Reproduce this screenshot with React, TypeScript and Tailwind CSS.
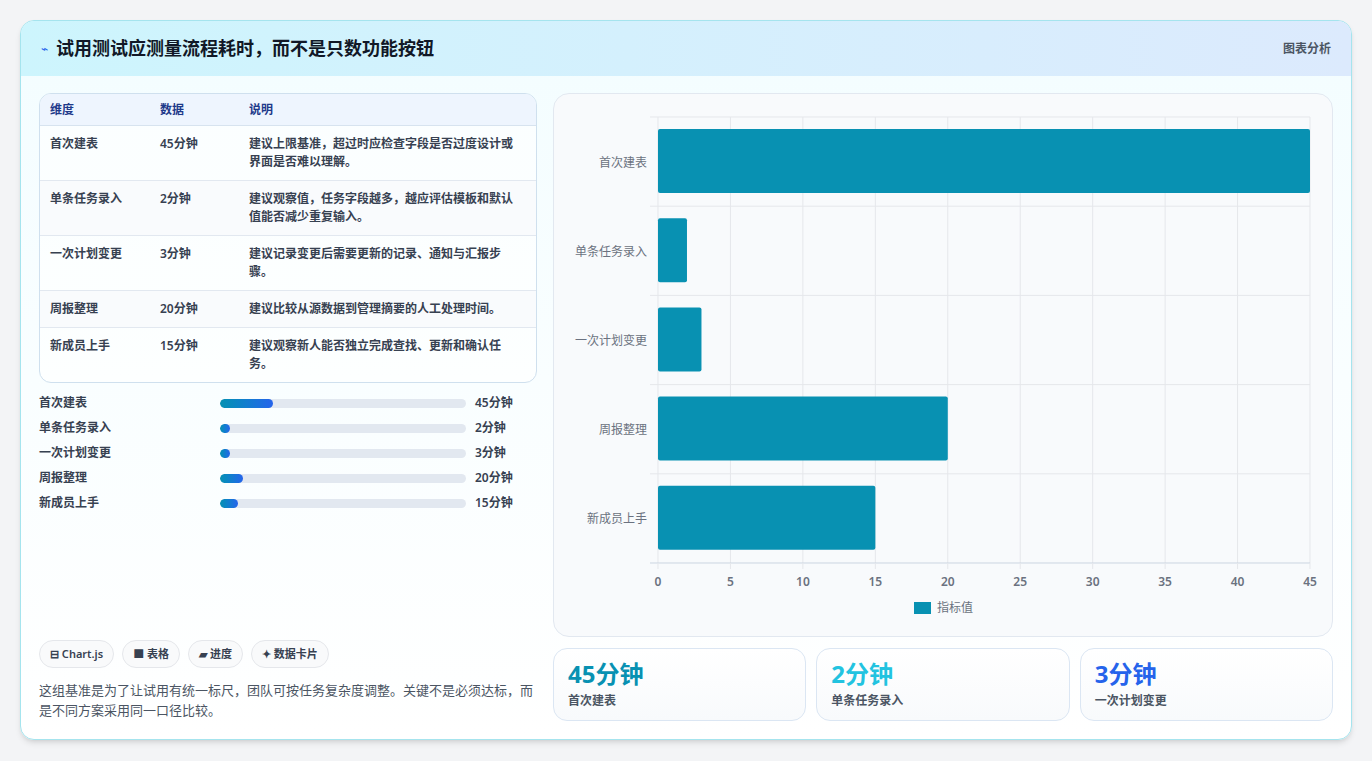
const font = { fontFamily: '"Noto Sans", "Noto Sans CJK SC", sans-serif' };

const rows = [
  ["首次建表", "45分钟", "建议上限基准，超过时应检查字段是否过度设计或界面是否难以理解。"],
  ["单条任务录入", "2分钟", "建议观察值，任务字段越多，越应评估模板和默认值能否减少重复输入。"],
  ["一次计划变更", "3分钟", "建议记录变更后需要更新的记录、通知与汇报步骤。"],
  ["周报整理", "20分钟", "建议比较从源数据到管理摘要的人工处理时间。"],
  ["新成员上手", "15分钟", "建议观察新人能否独立完成查找、更新和确认任务。"],
];
const vals = [45, 2, 3, 20, 15];

function Chart() {
  const x0 = 104, w = 652, top = 23, band = 89.2;
  const sx = (v: number) => x0 + (v * w) / 45;
  return (
    <svg width="779" height="543" className="block">
      {Array.from({ length: 10 }).map((_, i) => (
        <line key={i} x1={sx(i * 5)} x2={sx(i * 5)} y1={top} y2={top + band * 5} stroke="#e5e7eb" />
      ))}
      {Array.from({ length: 6 }).map((_, i) => (
        <line key={i} x1={x0 - 8} x2={x0 + w} y1={top + band * i} y2={top + band * i} stroke={i === 5 ? "#cbd5e1" : "#e5e7eb"} />
      ))}
      {Array.from({ length: 10 }).map((_, i) => (
        <line key={i} x1={sx(i * 5)} x2={sx(i * 5)} y1={top + band * 5} y2={top + band * 5 + 6} stroke="#e5e7eb" />
      ))}
      {vals.map((v, i) => (
        <g key={i}>
          <rect x={x0} y={top + band * i + 12} width={sx(v) - x0} height={64} rx={2} fill="#0891b2" />
          <text x={93} y={top + band * i + band / 2 + 5} textAnchor="end" fontSize="12" fill="#6b7280" style={font}>{rows[i][0]}</text>
        </g>
      ))}
      {Array.from({ length: 10 }).map((_, i) => (
        <text key={i} x={sx(i * 5)} y={492} textAnchor="middle" fontSize="12" fontWeight="600" fill="#6b7280" style={font}>{i * 5}</text>
      ))}
      <rect x={360} y={508} width={17} height={12} fill="#0891b2" />
      <text x={383} y={518} fontSize="12" fill="#6b7280" style={font}>指标值</text>
    </svg>
  );
}

export default function App() {
  return (
    <div className="w-[1372px] h-[761px] bg-[#f3f4f6] pt-[20px] pl-[20px]" style={font}>
      <div className="w-[1332px] h-[720px] rounded-[14px] border border-[#a5e4ee] bg-gradient-to-b from-[#f3fdff] to-white overflow-hidden shadow-md">
        <div className="h-[55px] flex items-center justify-between px-[20px] bg-gradient-to-r from-[#cdf5fd] to-[#dceafd]">
          <div className="flex items-center gap-[8px]">
            <span className="text-[12px] text-[#2563eb]">⌁</span>
            <span className="text-[18px] font-bold text-[#111827]">试用测试应测量流程耗时，而不是只数功能按钮</span>
          </div>
          <span className="text-[12px] font-semibold text-[#4b5563]">图表分析</span>
        </div>
        <div className="flex gap-[16px] px-[18px] pt-[17px]">
          <div className="w-[498px] flex flex-col h-[628px]">
            <div className="rounded-[12px] border border-[#cfe0ee] overflow-hidden text-[12px] bg-white/60">
              <div className="flex h-[32px] items-center bg-[#eef5fe] border-b border-[#d7e3ef] text-[#1e3a8a] font-semibold">
                <div className="w-[120px] pl-[10px]">维度</div>
                <div className="w-[89px]">数据</div>
                <div>说明</div>
              </div>
              {rows.map((r, i) => (
                <div key={i} className={`flex py-[9px] leading-[18px] font-semibold text-[#374151] ${i < 4 ? "border-b border-[#e2e8f0]" : ""} ${i % 2 === 1 ? "bg-[#f9fbfd]" : ""}`}>
                  <div className="w-[120px] pl-[10px]">{r[0]}</div>
                  <div className="w-[89px]">{r[1]}</div>
                  <div className="w-[270px]">{r[2]}</div>
                </div>
              ))}
            </div>
            <div className="mt-[11px] flex flex-col gap-[7px]">
              {rows.map((r, i) => (
                <div key={i} className="flex items-center h-[18px] text-[12px] font-semibold text-[#374151]">
                  <div className="w-[181px]">{r[0]}</div>
                  <div className="w-[246px] h-[9px] rounded-full bg-[#e2e8f0] overflow-hidden">
                    <div className="h-full rounded-full bg-gradient-to-r from-[#0891b2] to-[#2563eb]" style={{ width: `${Math.max(4, (vals[i] / 210) * 100)}%` }} />
                  </div>
                  <div className="ml-[9px]">{r[1]}</div>
                </div>
              ))}
            </div>
            <div className="mt-auto flex gap-[8px] text-[11px] font-semibold text-[#374151]">
              {["⊟ Chart.js", "■ 表格", "▰ 进度", "✦ 数据卡片"].map((c) => (
                <span key={c} className="h-[28px] px-[10px] flex items-center rounded-full border border-[#e5e7eb] bg-[#f9fafb]">{c}</span>
              ))}
            </div>
            <p className="mt-[12px] text-[13px] leading-[20px] text-[#4b5563] pb-[1px]">这组基准是为了让试用有统一标尺，团队可按任务复杂度调整。关键不是必须达标，而是不同方案采用同一口径比较。</p>
          </div>
          <div className="w-[780px] flex flex-col gap-[11px]">
            <div className="h-[544px] rounded-[16px] border border-[#e2e8f0] bg-[#f8fafc]">
              <Chart />
            </div>
            <div className="grid grid-cols-3 gap-[10px]">
              {[["45分钟", "text-[#0891b2]", "首次建表"], ["2分钟", "text-[#22c3e0]", "单条任务录入"], ["3分钟", "text-[#2563eb]", "一次计划变更"]].map(([v, c, l]) => (
                <div key={l} className="h-[73px] rounded-[14px] border border-[#dbe6f3] bg-gradient-to-b from-white to-[#f8fafc] px-[14px] pt-[9px]">
                  <div className={`text-[24px] font-bold leading-[32px] ${c}`}>{v}</div>
                  <div className="text-[12px] font-semibold text-[#4b5563] mt-[2px]">{l}</div>
                </div>
              ))}
            </div>
          </div>
        </div>
      </div>
    </div>
  );
}
